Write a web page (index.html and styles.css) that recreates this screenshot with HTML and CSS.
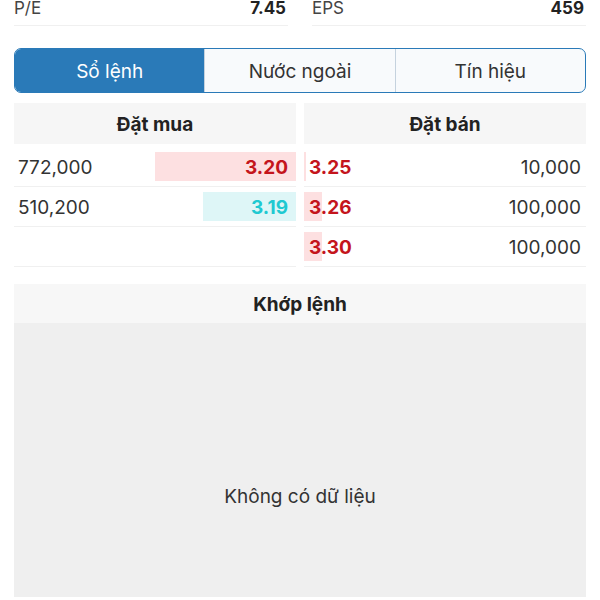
FILE: index.html
```html
<!DOCTYPE html>
<html>
<head>
<meta http-equiv="Content-Type" content="text/html; charset=UTF-8" />
<link rel="stylesheet" href="styles.css">
</head>

<body>

<div id="stats">
	<div class="stat"><span class="stat-label">P/E</span><span class="stat-value">7.45</span></div>
	<div class="stat"><span class="stat-label">EPS</span><span class="stat-value">459</span></div>
</div>

<div id="tabs">
	<div class="tab active">Sổ lệnh</div>
	<div class="tab">Nước ngoài</div>
	<div class="tab">Tín hiệu</div>
</div>

<div id="book">
	<div class="side">
		<div class="side-header">Đặt mua</div>
		<div class="row buy bar-red" style="background-size: 141px 29px">
			<span class="vol">772,000</span><span class="price red">3.20</span>
		</div>
		<div class="row buy bar-cyan" style="background-size: 93px 29px">
			<span class="vol">510,200</span><span class="price cyan">3.19</span>
		</div>
		<div class="row buy"></div>
	</div>
	<div class="side">
		<div class="side-header">Đặt bán</div>
		<div class="row sell bar-red" style="background-size: 2px 29px">
			<span class="price red">3.25</span><span class="vol">10,000</span>
		</div>
		<div class="row sell bar-red" style="background-size: 18px 29px">
			<span class="price red">3.26</span><span class="vol">100,000</span>
		</div>
		<div class="row sell bar-red" style="background-size: 18px 29px">
			<span class="price red">3.30</span><span class="vol">100,000</span>
		</div>
	</div>
</div>

<div id="matched">
	<div class="matched-header">Khớp lệnh</div>
	<div class="matched-body">Không có dữ liệu</div>
</div>

</body>
</html>
```

FILE: styles.css
```css
body {
	margin: 0;
	font-family: "Inter", "Noto Sans", sans-serif;
	font-size: 19px;
	color: #333333;
	background-color: white;
}

#stats {
	display: flex;
	gap: 24px;
	margin: 0 14px;
}

.stat {
	flex: 1;
	display: flex;
	justify-content: space-between;
	line-height: 16px;
	padding-bottom: 9px;
	border-bottom: 1px solid #f0f0f0;
	font-size: 17px;
}

.stat-label {
	color: #444444;
}

.stat-value {
	font-weight: 700;
	color: #222222;
	padding-right: 2px;
}

#tabs {
	display: flex;
	margin: 22px 14px 0 14px;
	height: 43px;
	border: 1.5px solid #2a7ab8;
	border-radius: 7px;
	overflow: hidden;
	background-color: #f8fafc;
}

.tab {
	flex: 1;
	display: flex;
	align-items: center;
	justify-content: center;
	padding-top: 2px;
	border-left: 1.5px solid #c5d2de;
	color: #333333;
}

.tab:first-child {
	border-left: none;
}

.tab.active {
	background-color: #2a7ab8;
	color: white;
}

#book {
	display: grid;
	grid-template-columns: 1fr 1fr;
	column-gap: 8px;
	margin: 10px 14px 0 14px;
}

.side-header {
	height: 41px;
	line-height: 43px;
	text-align: center;
	font-weight: 700;
	color: #222222;
	background-color: #f6f6f6;
	margin-bottom: 3px;
}

.row {
	display: flex;
	align-items: center;
	justify-content: space-between;
	height: 39px;
	border-bottom: 1px solid #f0f0f0;
	background-repeat: no-repeat;
}

.row span {
	padding-top: 2px;
}

.row.buy {
	background-position: right center;
}

.row.sell {
	background-position: left center;
}

.bar-red {
	background-image: linear-gradient(#fde0e1, #fde0e1);
}

.bar-cyan {
	background-image: linear-gradient(#def6f7, #def6f7);
}

.buy .vol {
	padding-left: 4px;
}

.buy .price {
	padding-right: 8px;
}

.sell .price {
	padding-left: 5px;
}

.sell .vol {
	padding-right: 5px;
}

.price {
	font-weight: 700;
}

.red {
	color: #c4151c;
}

.cyan {
	color: #1fc9d1;
}

#matched {
	margin: 17px 14px 0 14px;
}

.matched-header {
	height: 39px;
	line-height: 41px;
	text-align: center;
	font-weight: 700;
	color: #222222;
	background-color: #f7f7f7;
}

.matched-body {
	height: 274px;
	box-sizing: border-box;
	padding-top: 162px;
	text-align: center;
	background-color: #efefef;
	line-height: 24px;
}
```
